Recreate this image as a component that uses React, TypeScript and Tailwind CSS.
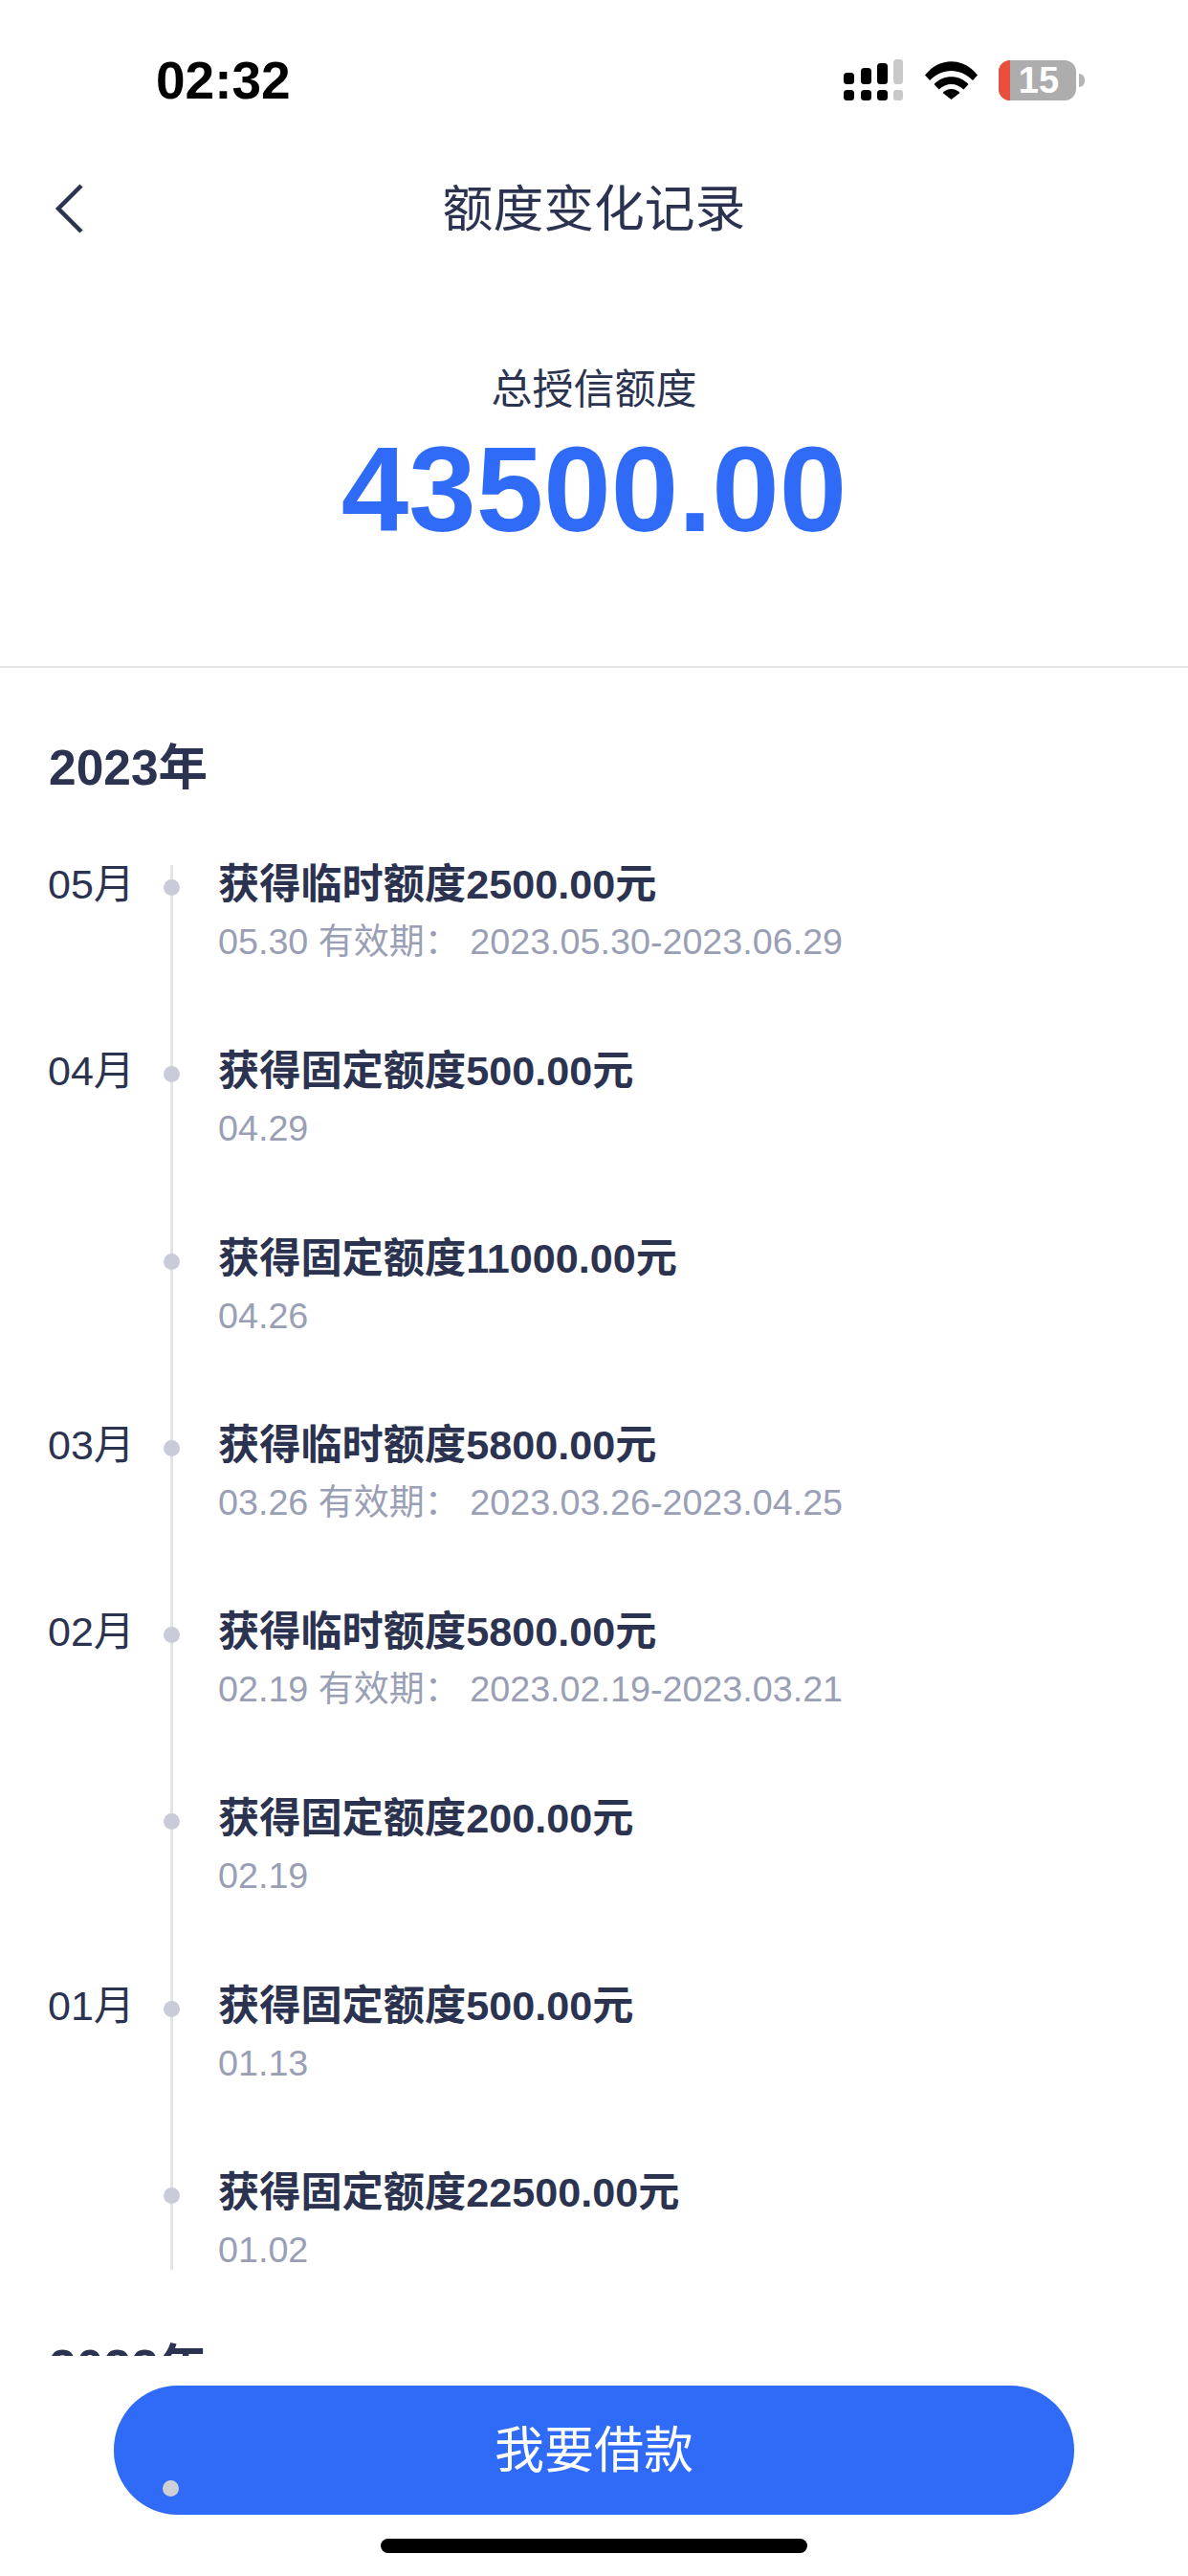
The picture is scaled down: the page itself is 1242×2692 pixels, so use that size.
const records = [
  { month: "05月", title: "获得临时额度2500.00元", date: "05.30", range: "2023.05.30-2023.06.29" },
  { month: "04月", title: "获得固定额度500.00元", date: "04.29" },
  { month: "", title: "获得固定额度11000.00元", date: "04.26" },
  { month: "03月", title: "获得临时额度5800.00元", date: "03.26", range: "2023.03.26-2023.04.25" },
  { month: "02月", title: "获得临时额度5800.00元", date: "02.19", range: "2023.02.19-2023.03.21" },
  { month: "", title: "获得固定额度200.00元", date: "02.19" },
  { month: "01月", title: "获得固定额度500.00元", date: "01.13" },
  { month: "", title: "获得固定额度22500.00元", date: "01.02" },
];

function StatusIcons() {
  return (
    <div className="flex items-center">
      <svg width="62" height="43" viewBox="0 0 62 43" className="block">
        <rect x="0" y="14" width="11" height="12" rx="3.5" fill="#000" />
        <rect x="18" y="9" width="11" height="17" rx="3.5" fill="#000" />
        <rect x="35" y="4" width="11" height="22" rx="3.5" fill="#000" />
        <rect x="52" y="0" width="10" height="26" rx="3.5" fill="#c9c9c9" />
        <rect x="0" y="32" width="11" height="11" rx="3.5" fill="#000" />
        <rect x="18" y="32" width="11" height="11" rx="3.5" fill="#000" />
        <rect x="35" y="32" width="11" height="11" rx="3.5" fill="#000" />
        <rect x="52" y="32" width="10" height="11" rx="3" fill="#c9c9c9" />
      </svg>
      <svg width="55" height="40" viewBox="0 0 55 40" className="ml-[23px] block">
        <path d="M0 14.5 C15 -4.5 40 -4.5 55 14.5 L50 20 C37 6.5 18 6.5 5 20 Z" fill="#000" />
        <path d="M9.5 24 C19 13.5 36 13.5 45.5 24 L40.5 29.5 C33 22 22 22 14.5 29.5 Z" fill="#000" />
        <path d="M18.5 33 C23.5 27.5 31.5 27.5 36.5 33 L27.5 40 Z" fill="#000" />
      </svg>
      <div className="ml-[22px] flex items-center">
        <div className="relative flex h-[42px] w-[81px] items-center justify-center overflow-hidden rounded-[12px] bg-[#adadad]">
          <div className="absolute left-0 top-0 h-full w-[12px] bg-[#eb4e3d]" />
          <span className="relative pl-[3px] text-[38px] font-bold leading-none text-white">15</span>
        </div>
        <div className="ml-[3px] h-[14px] w-[6px] rounded-r-full bg-[#b5b5b5]" />
      </div>
    </div>
  );
}

function RecordRow({ item, last }: { item: (typeof records)[number]; last: boolean }) {
  return (
    <div className={`flex ${last ? "h-[100.5px]" : "h-[195.3px]"}`}>
      <div className="w-[128px] text-[43px] leading-[40px] text-[#2b3350]">{item.month}</div>
      <div className="relative w-[50px]">
        <div className="absolute left-0 top-0 h-full w-[3px] bg-[#e3e4ea]" />
        <div className="absolute left-[-7px] top-[15px] size-[17px] rounded-full bg-[#c9cbd8]" />
      </div>
      <div className="min-w-0">
        <div className="whitespace-nowrap text-[43.2px] font-bold leading-[40px] text-[#2b3350]">
          {item.title}
        </div>
        <div className="mt-[20px] whitespace-pre text-[37.7px] leading-[40px] text-[#9a9fb5]">
          {item.date}
          {item.range && (
            <>
              {" "}
              <span className="text-[37px]">有效期：</span> {item.range}
            </>
          )}
        </div>
      </div>
    </div>
  );
}

export default function App() {
  return (
    <div className="relative flex h-[2692px] w-[1242px] flex-col overflow-hidden bg-white font-['Liberation_Sans','Noto_Sans_CJK_SC',sans-serif]">
      <div className="flex h-[2462px] flex-col overflow-hidden">
        <div className="flex h-[105px] shrink-0 items-end justify-between pl-[163px] pr-[108px]">
          <span className="text-[55px] font-bold leading-[42px] text-black">02:32</span>
          <StatusIcons />
        </div>
        <div className="relative mt-[81px] flex h-[66px] shrink-0 items-center justify-center">
          <svg width="32" height="52" viewBox="0 0 32 52" fill="none" className="absolute left-[57px] top-[6px]">
            <path d="M28 2 L4 26 L28 50" stroke="#2b3350" strokeWidth="4.5" />
          </svg>
          <span className="text-[52.8px] leading-[66px] text-[#2b3350]">额度变化记录</span>
        </div>
        <div className="flex h-[446px] shrink-0 flex-col items-center border-b-2 border-[#e6e6e6] pt-[130px]">
          <span className="text-[43px] leading-[50px] text-[#2b3350]">总授信额度</span>
          <span className="mt-[14px] text-[126.7px] font-bold leading-[130px] text-[#2f6bf6]">43500.00</span>
        </div>
        <section className="pl-[50px] pr-[50px] pt-[74px]">
          <h2 className="mb-[72px] ml-[1px] text-[51.5px] font-bold leading-[60px] text-[#2b3350]">2023年</h2>
          <div>
            {records.map((item, index) => (
              <RecordRow key={item.title + item.date} item={item} last={index === records.length - 1} />
            ))}
          </div>
          <h2 className="ml-[1px] mt-[72px] text-[51.5px] font-bold leading-[60px] text-[#2b3350]">2022年</h2>
        </section>
      </div>
      <div className="flex flex-1 flex-col items-center pt-[31px]">
        <button className="flex h-[135px] w-[1004px] items-center justify-center rounded-[67px] bg-[#2f6bf6] text-[52px] leading-none text-white">
          我要借款
        </button>
        <div className="mt-[25px] h-[15px] w-[446px] rounded-full bg-black" />
      </div>
      <div className="absolute left-[170px] top-[2592px] size-[17px] rounded-full bg-[#cfd0d6]" />
    </div>
  );
}
